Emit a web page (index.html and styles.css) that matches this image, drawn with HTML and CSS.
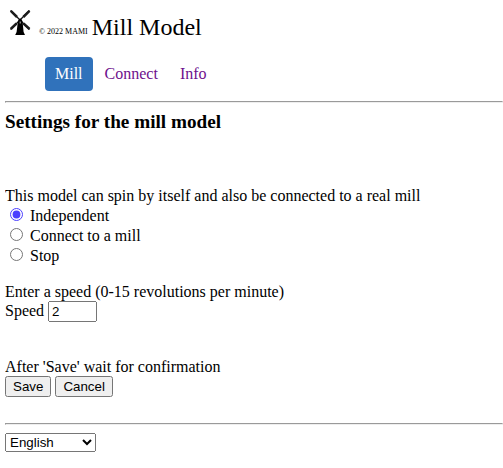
FILE: index.html
```html
<!DOCTYPE html>
<html lang="en">
<head>
<meta charset="utf-8">
<title>Mill Model</title>
<link rel="stylesheet" href="styles.css">
</head>
<body>
<header class="brand">
<svg class="logo" viewBox="0 0 30 30" width="30" height="30">
<path d="M5.5 3.5L24.5 22.5M24.5 3.5L5.5 22.5" stroke="#111" stroke-width="1.3"/>
<path d="M5.8 3.8L12 10M24.5 3.8L18.3 10M5.8 22L11.5 16.5M24.5 22L18.5 16.5" stroke="#1c1c1c" stroke-width="2.5" fill="none"/>
<path d="M12.7 16Q13 12 15.2 11.5Q17.4 12 17.7 16L18.6 25L20 28H10.2L11.6 25Z" fill="#000"/>
<path d="M14.6 14.5H16V16.5H14.6Z" fill="#888"/>
</svg>
<span class="copy">© 2022 MAMI</span>
<span class="name">Mill Model</span>
</header>
<nav class="tabs"><a class="tab active" href="#">Mill</a><a class="tab" href="#">Connect</a><a class="tab" href="#">Info</a></nav>
<hr class="rule">
<h1 class="title">Settings for the mill model</h1>
<form class="settings">
<div class="modes">
<div>This model can spin by itself and also be connected to a real mill</div>
<label class="option"><input type="radio" name="mode" checked><span>Independent</span></label>
<label class="option"><input type="radio" name="mode"><span>Connect to a mill</span></label>
<label class="option"><input type="radio" name="mode"><span>Stop</span></label>
</div>
<div class="speed">
<div>Enter a speed (0-15 revolutions per minute)</div>
<label>Speed <input class="number" type="text" value="2"></label>
</div>
<div class="actions">
<div>After 'Save' wait for confirmation</div>
<button type="button">Save</button> <button type="button">Cancel</button>
</div>
</form>
<hr class="rule">
<select class="language"><option>English</option></select>
</body>
</html>
```

FILE: styles.css
```css
body { margin: 0 0 0 5px; font: 16px/19px "Liberation Serif", serif; color: #000; background: #fff; }
.brand { display: flex; height: 57px; align-items: flex-start; }
.logo { margin-top: 7px; }
.copy { margin: 22px 4px 0; font-size: 8px; line-height: 20px; color: #000; }
.name { margin-top: 13px; font-size: 24px; line-height: 28px; }
.tabs { display: flex; gap: 2px; height: 34px; margin-left: 40px; }
.tab { padding: 8px 10px; line-height: 18px; color: #6e0f8c; text-decoration: none; border-radius: 4px; }
.tab.active { background: #3072bb; color: #fff; }
.rule { margin: 10px 0 8px; }
.title { margin: 0 0 54px; font-size: 19.2px; line-height: 21px; }
.option { display: flex; height: 20px; line-height: 22px; }
.option input { margin: 3px 7px 0 5px; width: 13px; height: 13px; accent-color: #4b3fff; }
.option:last-child { line-height: 21px; }
.speed { margin-top: 17px; }
.number { width: 49px; height: 21px; box-sizing: border-box; margin: 0; font: 13.333px "Liberation Sans", sans-serif; }
.actions { margin-top: 35px; height: 56px; }
button, .language { margin: 0; font: 13.333px "Liberation Sans", sans-serif; }
.language { width: 91px; display: block; }
```
